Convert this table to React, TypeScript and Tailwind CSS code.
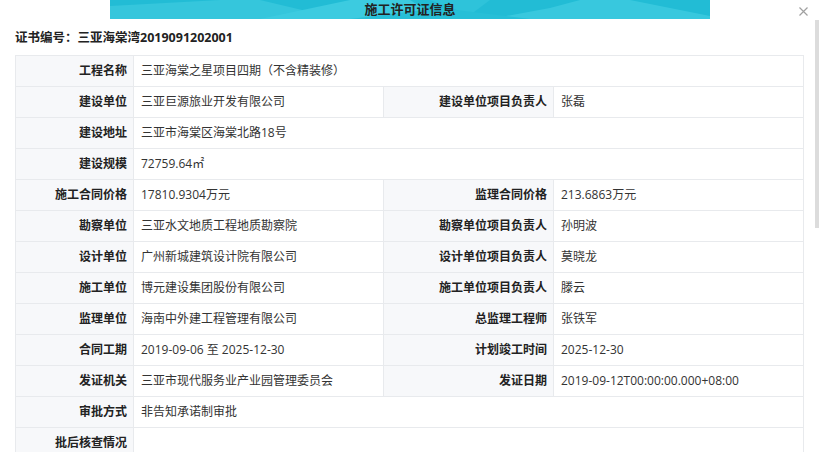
import React from 'react';

type Cell = { label: string; value: string };
type Row = Cell[];

const rows: Row[] = [
  [{ label: '工程名称', value: '三亚海棠之星项目四期（不含精装修）' }],
  [
    { label: '建设单位', value: '三亚巨源旅业开发有限公司' },
    { label: '建设单位项目负责人', value: '张磊' },
  ],
  [{ label: '建设地址', value: '三亚市海棠区海棠北路18号' }],
  [{ label: '建设规模', value: '72759.64㎡' }],
  [
    { label: '施工合同价格', value: '17810.9304万元' },
    { label: '监理合同价格', value: '213.6863万元' },
  ],
  [
    { label: '勘察单位', value: '三亚水文地质工程地质勘察院' },
    { label: '勘察单位项目负责人', value: '孙明波' },
  ],
  [
    { label: '设计单位', value: '广州新城建筑设计院有限公司' },
    { label: '设计单位项目负责人', value: '莫晓龙' },
  ],
  [
    { label: '施工单位', value: '博元建设集团股份有限公司' },
    { label: '施工单位项目负责人', value: '滕云' },
  ],
  [
    { label: '监理单位', value: '海南中外建工程管理有限公司' },
    { label: '总监理工程师', value: '张铁军' },
  ],
  [
    { label: '合同工期', value: '2019-09-06 至 2025-12-30' },
    { label: '计划竣工时间', value: '2025-12-30' },
  ],
  [
    { label: '发证机关', value: '三亚市现代服务业产业园管理委员会' },
    { label: '发证日期', value: '2019-09-12T00:00:00.000+08:00' },
  ],
  [{ label: '审批方式', value: '非告知承诺制审批' }],
  [{ label: '批后核查情况', value: '' }],
];

function Banner() {
  return (
    <div className="relative mx-[110px] h-[19px] w-[600px] overflow-hidden bg-[#22bcd5]">
      {/* 背景折线色块 */}
      <svg className="absolute inset-0" width="600" height="19" viewBox="0 0 600 19">
        <polygon points="0,19 0,6 110,0 150,0 230,19" fill="#35c6dc" />
        <polygon points="150,19 240,0 300,0 330,19" fill="#3ccbe0" />
        <polygon points="320,0 380,0 360,15" fill="#2ec3da" />
        <polygon points="380,19 440,8 470,0 520,0 600,16 600,19" fill="#38c8de" />
        <polygon points="240,19 330,8 420,19" fill="#27bfd7" />
      </svg>
      <div className="relative text-center text-[13px] font-bold leading-[19px] text-[#222]">
        施工许可证信息
      </div>
    </div>
  );
}

export default function App() {
  return (
    <div
      className="relative h-[452px] w-[820px] overflow-hidden bg-white text-[12px] text-[#333]"
      style={{ fontFamily: '"Open Sans", "Noto Sans CJK SC", sans-serif' }}
    >
      <Banner />
      {/* 关闭 */}
      <svg className="absolute left-[799px] top-[7px]" width="9" height="9" viewBox="0 0 9 9">
        <path d="M0.5 0.5L8.5 8.5M8.5 0.5L0.5 8.5" stroke="#a0a0a0" strokeWidth="1.2" />
      </svg>
      {/* 滚动条 */}
      <div className="absolute right-[1px] top-[20px] h-[208px] w-[4px] bg-[#dcdcdc]" />

      <div className="px-[15px] pt-[10px] pb-[8px] text-[12.5px] font-bold leading-[18px] text-[#222]">
        证书编号：三亚海棠湾2019091202001
      </div>

      <table className="ml-[15px] w-[788px] table-fixed border-collapse">
        <colgroup>
          <col className="w-[118px]" />
          <col className="w-[250px]" />
          <col className="w-[170px]" />
          <col className="w-[250px]" />
        </colgroup>
        <tbody>
          {rows.map((row, i) => (
            <tr key={i} className="h-[31px]">
              {row.map((c, j) => (
                <React.Fragment key={j}>
                  <td className="border border-[#e8eaed] bg-[#f7f8fa] pr-[6px] text-right font-bold text-[#222]">
                    {c.label}
                  </td>
                  <td
                    colSpan={row.length === 1 ? 3 : 1}
                    className="border border-[#e8eaed] pl-[7px] text-[#333]"
                  >
                    {c.value}
                  </td>
                </React.Fragment>
              ))}
            </tr>
          ))}
        </tbody>
      </table>
    </div>
  );
}
